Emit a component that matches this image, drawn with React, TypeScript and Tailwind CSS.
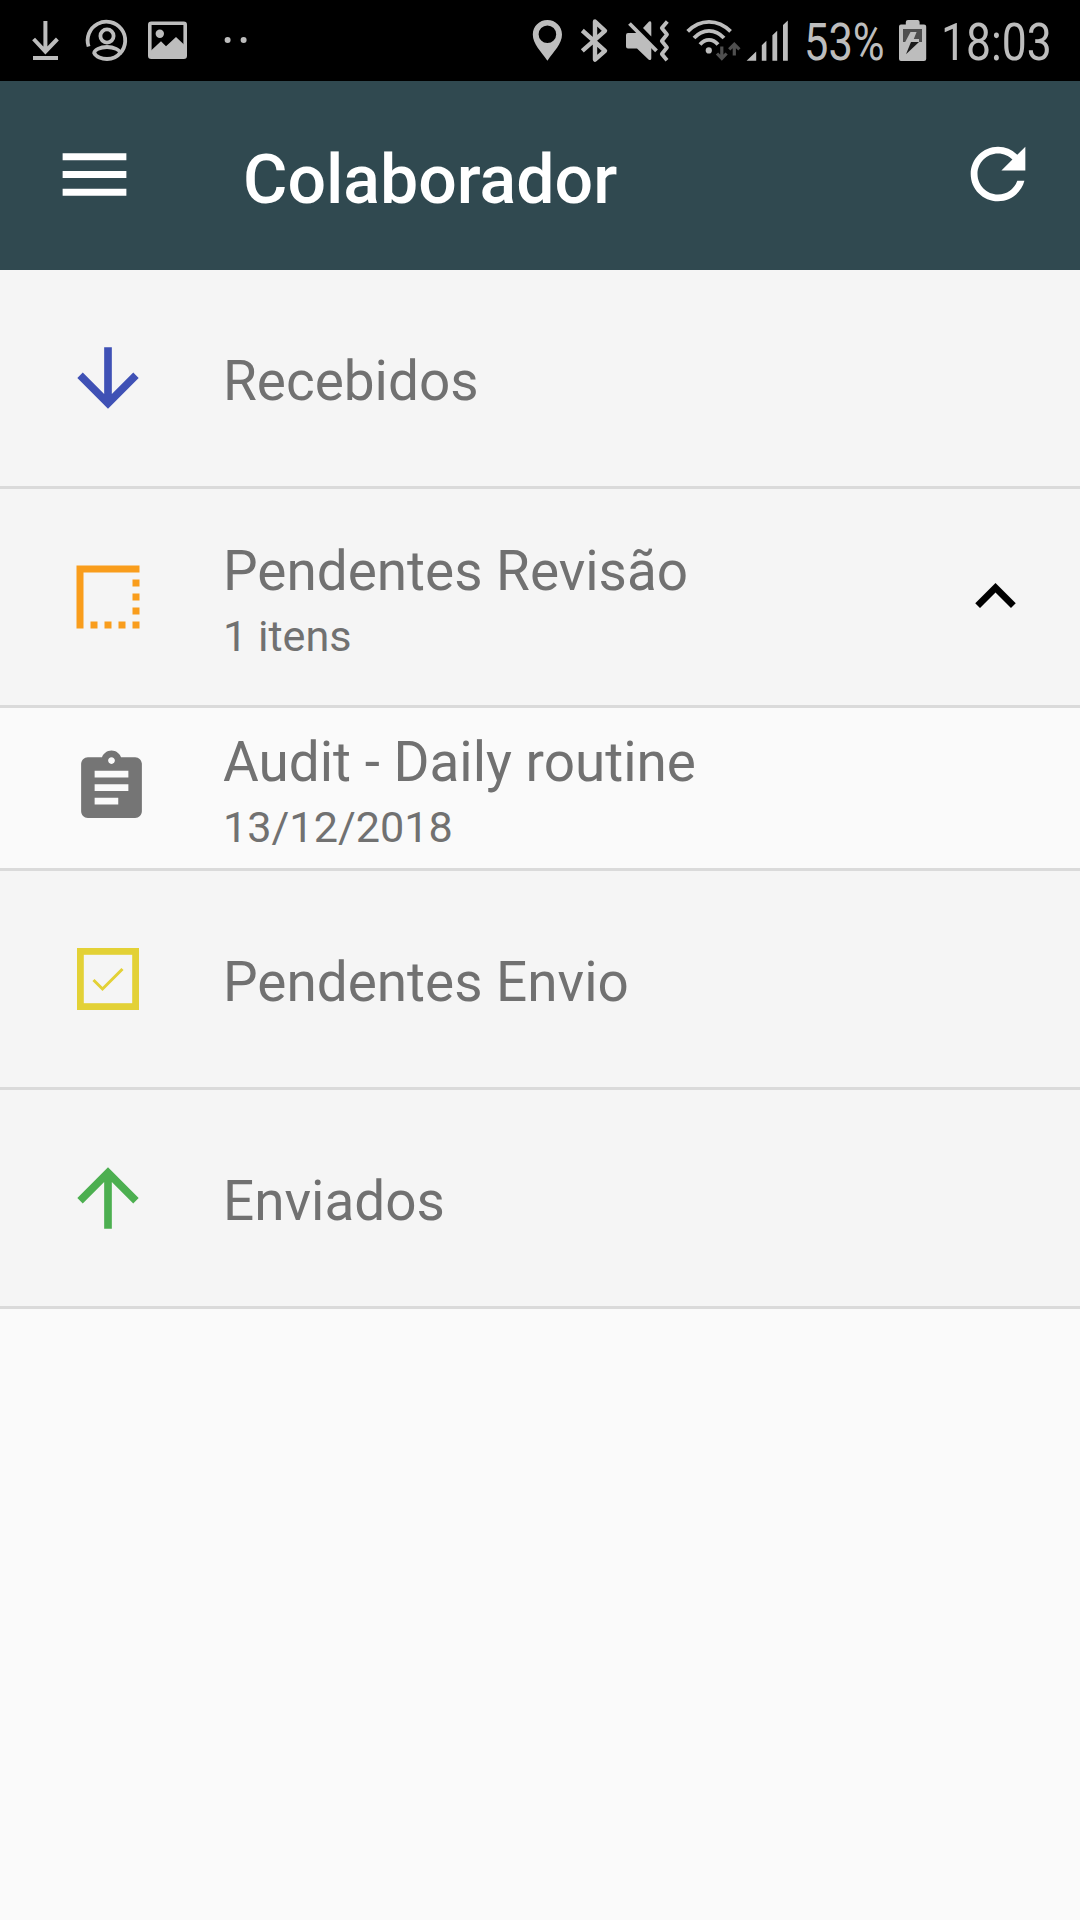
import { ReactNode } from "react";
import {
  MdArrowDownward,
  MdArrowUpward,
  MdAssignment,
  MdBorderStyle,
  MdExpandLess,
  MdMenu,
  MdRefresh,
} from "react-icons/md";

type RowProps = {
  icon: ReactNode;
  title: string;
  subtitle?: string;
  child?: boolean;
  expanded?: boolean;
};

function CheckboxIcon() {
  return (
    <svg width="62" height="62" viewBox="0 0 62 62" fill="none" stroke="#e3d136">
      <rect x="3.4" y="3.4" width="55.2" height="55.2" strokeWidth="6.8" />
      <path d="M16.5 32L25.5 41L45.5 21" strokeWidth="3" />
    </svg>
  );
}

// The viewBox of every status icon starts at its own x in the bar
function StatusIcons() {
  return (
    <div className="flex h-full items-center">
      <svg className="ml-[30px]" width="32" height="81" viewBox="30 0 32 81" fill="none" stroke="#bdbdbd">
        <path d="M45.4 21V52M33.6 39L45.4 51.5L57.4 39" strokeWidth="4" />
        <path d="M33 58H58" strokeWidth="4" />
      </svg>
      <svg className="ml-[22px]" width="46" height="81" viewBox="84 0 46 81" fill="none" stroke="#bdbdbd" strokeWidth="3.8">
        <path d="M88.6 46.5A18.8 18.8 0 1 1 120 53.5" />
        <circle cx="107" cy="36" r="6.6" />
        <path d="M94.2 53C94.2 50 100 47 107 47S119.8 50 120.2 53C117 57 112 59 107 59S96 57 94.2 53Z" />
      </svg>
      <svg className="ml-4" width="44" height="81" viewBox="146 0 44 81">
        <rect x="149.8" y="23.3" width="35.4" height="34" rx="1.5" fill="none" stroke="#bdbdbd" strokeWidth="3.6" />
        <circle cx="159.8" cy="33.7" r="4.2" fill="#bdbdbd" />
        <path d="M150 51.5L161 41.3L166 46.3L176 37L185 45.5V57H150Z" fill="#bdbdbd" />
      </svg>
      <svg className="ml-[30px]" width="30" height="81" viewBox="220 0 30 81" fill="#bdbdbd">
        <circle cx="227.6" cy="40" r="3" />
        <circle cx="243.6" cy="40" r="3" />
      </svg>

      <svg className="ml-[280px]" width="34" height="81" viewBox="530 0 34 81" fill="#bdbdbd">
        <path
          fillRule="evenodd"
          d="M547.4 20C539.4 20 532.8 26.4 532.8 34.4C532.8 44 541 51 547.4 60.8C553.8 51 562 44 562 34.4C562 26.4 555.4 20 547.4 20ZM547.4 25.4A8.8 8.8 0 1 1 547.4 43A8.8 8.8 0 1 1 547.4 25.4Z"
        />
      </svg>
      <svg className="ml-[14px]" width="32" height="81" viewBox="578 0 32 81" fill="none" stroke="#bdbdbd" strokeWidth="4.4" strokeLinejoin="round">
        <path d="M582.3 30.5L605 50.8L595 59.6V21.5L605 30.8L582.3 50.8" />
      </svg>
      <svg className="ml-3" width="50" height="81" viewBox="622 0 50 81">
        <path d="M643 28L649 21.5Q651.3 20.5 651.3 23V36.5Z" fill="#bdbdbd" />
        <path d="M628 33H638L651.3 46V58.5Q651 61 648.5 59.5L637 48.5H628Q626 48.5 626 46.5V35Q626 33 628 33Z" fill="#bdbdbd" />
        <path d="M629.5 23.5L656.5 50.8" stroke="#bdbdbd" strokeWidth="3.8" />
        <path d="M667.3 21.5L661.8 28L667 34.5L661.8 41L667 47.5L661.8 54L667 60.3" fill="none" stroke="#bdbdbd" strokeWidth="3.8" strokeLinejoin="round" />
      </svg>
      <svg className="ml-3" width="58" height="81" viewBox="684 0 58 81" fill="none">
        <g stroke="#bdbdbd" strokeWidth="3.8">
          <path d="M687.7 31.4Q697 21.8 709 21.8T730.6 31.4" />
          <path d="M694 38Q700.5 30.8 709 30.8T724 38" />
          <path d="M700 44.5Q704 39.8 709 39.8T718 44.5" />
        </g>
        <circle cx="708.8" cy="50.4" r="3.1" fill="#bdbdbd" />
        <path d="M721.8 46.5V57.5M717 53.5L721.8 58.5L726.6 53.5M734.3 55.5V45M729.2 49.3L734.3 44.3L739.4 49.3" stroke="#4f4f4f" strokeWidth="3.2" />
      </svg>
      <svg className="ml-[2px]" width="46" height="81" viewBox="744 0 46 81" fill="#bdbdbd">
        <path d="M746.6 60.8H756.2V51.4ZM761.8 60.8H766.4V40.8L761.8 45.2ZM772.4 60.8H777.2V30.8L772.4 35.2ZM783 60.8H787.8V20.4L783 25Z" />
      </svg>
      <span className="mt-[5px] ml-[14px] block w-[93px] origin-left scale-x-[0.835] text-[52px] leading-none whitespace-nowrap">
        53%
      </span>
      <svg className="-ml-px" width="32" height="81" viewBox="896 0 32 81" fill="#bdbdbd">
        <path d="M905.8 24.5V22Q905.8 20 908 20H917.6Q919.6 20 919.6 22V24.5H924Q926.2 24.5 926.2 26.5V59Q926.2 61 924 61H901Q899 61 899 59V26.5Q899 24.5 901 24.5Z" />
        <path d="M903 29H922V42H903Z" fill="#4f4f4f" />
        <path d="M910.5 32H916.6L913.8 39H919V42H905.2Z" />
        <path d="M911 42H919L906 54.3Z" fill="#1c1c1c" />
      </svg>
      <span className="mt-[5px] ml-[13px] block origin-left scale-x-[0.855] text-[52px] leading-none whitespace-nowrap">
        18:03
      </span>
    </div>
  );
}

function Row({ icon, title, subtitle, child, expanded }: RowProps) {
  return (
    <li
      className={
        child
          ? "flex h-[163px] items-center border-b-3 border-[#dadada] bg-[#fafafa]"
          : "flex h-[219px] items-center border-b-3 border-[#dadada] bg-[#f5f5f5]"
      }
    >
      <div className={child ? "mb-px flex w-[223px] pl-[71px]" : "mr-[7px] flex w-[216px] justify-center"}>
        {icon}
      </div>
      <div className={subtitle ? "flex-1 pt-[12px]" : "flex-1 pt-[5px]"}>
        <p className="text-[54.9px] leading-[66px]">{title}</p>
        {subtitle && <p className="text-[43.2px] leading-[65px]">{subtitle}</p>}
      </div>
      {expanded && <MdExpandLess className="mr-[44px] mb-px size-[81px] text-black" />}
    </li>
  );
}

export default function App() {
  return (
    <div className="h-[1920px] w-[1080px] overflow-hidden bg-[#fafafa] font-['Roboto',sans-serif] text-[#717171]">
      <div className="h-[81px] bg-black text-[#bdbdbd]">
        <StatusIcons />
      </div>

      <header className="flex h-[189px] items-center bg-[#304950] text-white">
        <MdMenu className="mb-[3px] ml-[52px] size-[85px]" />
        <h1 className="ml-[106px] flex-1 pt-[8px] text-[68px] leading-none font-medium">
          Colaborador
        </h1>
        <MdRefresh className="mr-[41px] mb-[3px] size-[82px]" />
      </header>

      <ul>
        <Row
          icon={<MdArrowDownward className="size-[92px] text-[#3f51b5]" />}
          title="Recebidos"
        />
        <Row
          icon={<MdBorderStyle className="size-[84px] text-[#f99d1c]" />}
          title="Pendentes Revisão"
          subtitle="1 itens"
          expanded
        />
        <Row
          icon={<MdAssignment className="size-[81px] text-[#757575]" />}
          title="Audit - Daily routine"
          subtitle="13/12/2018"
          child
        />
        <Row icon={<CheckboxIcon />} title="Pendentes Envio" />
        <Row
          icon={<MdArrowUpward className="size-[92px] text-[#4caf50]" />}
          title="Enviados"
        />
      </ul>
    </div>
  );
}
